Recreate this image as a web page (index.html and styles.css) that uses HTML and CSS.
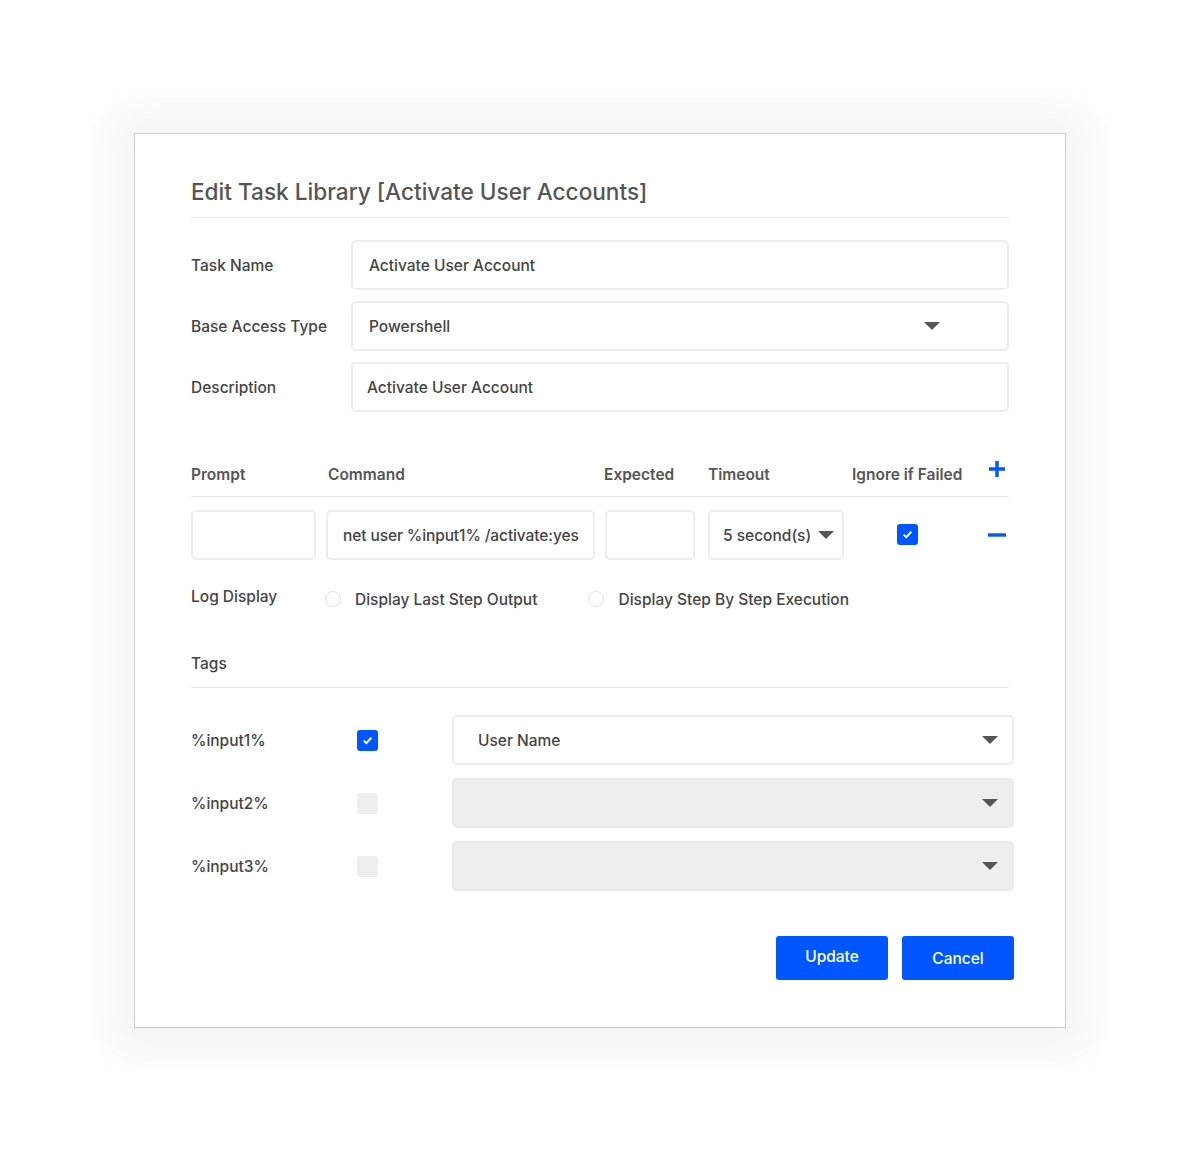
FILE: index.html
```html
<!DOCTYPE html>
<html lang="en">

    <head>
        <meta charset="UTF-8">
        <meta name="viewport" content="width=device-width, initial-scale=1.0">
        <title>Edit Task Library</title>

        <link rel="stylesheet" href="styles.css">

    </head>

    <body>
        <div class="modal">
            <h1 class="modal-title">Edit Task Library [Activate User Accounts]</h1>

            <div class="fields">
                <div class="field">
                    <label class="field-label">Task Name</label>
                    <div class="box">Activate User Account</div>
                </div>
                <div class="field">
                    <label class="field-label">Base Access Type</label>
                    <div class="box select">
                        <span>Powershell</span>
                        <span class="caret caret-base"></span>
                    </div>
                </div>
                <div class="field">
                    <label class="field-label">Description</label>
                    <div class="box box-desc">Activate User Account</div>
                </div>
            </div>

            <div class="steps-head">
                <span>Prompt</span>
                <span class="col-command">Command</span>
                <span class="col-expected">Expected</span>
                <span>Timeout</span>
                <span class="col-ignore">Ignore if Failed</span>
                <span class="col-action">
                    <svg width="18" height="18" viewBox="0 0 18 18">
                        <path d="M9 1v16M1 9h16" stroke="#0057ff" stroke-width="3.4" fill="none" />
                    </svg>
                </span>
            </div>

            <div class="steps-row">
                <div class="box cell-prompt"></div>
                <div class="box cell-command">net user %input1% /activate:yes</div>
                <div class="box cell-expected"></div>
                <div class="box cell-timeout select">
                    <span>5 second(s)</span>
                    <span class="caret"></span>
                </div>
                <div class="col-ignore">
                    <span class="check checked">
                        <svg width="11" height="9" viewBox="0 0 11 9">
                            <path d="M1.6 4.6 4.3 7.2 9.4 1.8" stroke="#fff" stroke-width="2" fill="none" />
                        </svg>
                    </span>
                </div>
                <div class="col-action">
                    <svg width="18" height="4" viewBox="0 0 18 4">
                        <path d="M0 2h18" stroke="#0057ff" stroke-width="3.4" />
                    </svg>
                </div>
            </div>

            <div class="log-display">
                <span class="log-label">Log Display</span>
                <label class="radio-option"><span class="radio"></span>Display Last Step Output</label>
                <label class="radio-option radio-second"><span class="radio"></span>Display Step By Step Execution</label>
            </div>

            <h2 class="section-title">Tags</h2>

            <div class="tags">
                <div class="tag-row">
                    <span class="tag-name">%input1%</span>
                    <span class="check checked">
                        <svg width="11" height="9" viewBox="0 0 11 9">
                            <path d="M1.6 4.6 4.3 7.2 9.4 1.8" stroke="#fff" stroke-width="2" fill="none" />
                        </svg>
                    </span>
                    <div class="box select tag-select">
                        <span>User Name</span>
                        <span class="caret"></span>
                    </div>
                </div>
                <div class="tag-row">
                    <span class="tag-name">%input2%</span>
                    <span class="check"></span>
                    <div class="box select tag-select disabled">
                        <span></span>
                        <span class="caret"></span>
                    </div>
                </div>
                <div class="tag-row">
                    <span class="tag-name">%input3%</span>
                    <span class="check"></span>
                    <div class="box select tag-select disabled">
                        <span></span>
                        <span class="caret"></span>
                    </div>
                </div>
            </div>

            <div class="actions">
                <button type="button" class="btn btn-update">Update</button>
                <button type="button" class="btn">Cancel</button>
            </div>
        </div>
    </body>

</html>
```

FILE: styles.css
```css
* {
    margin: 0;
    padding: 0;
    box-sizing: border-box;
}

body {
    font-family: 'Inter', 'Liberation Sans', sans-serif;
    background-color: #fff;
    color: #444;
    font-size: 15.5px;
    padding: 133px 0 134px;
}

.modal {
    width: 932px;
    margin: 0 auto;
    padding: 43px 56px 47px;
    background-color: #fff;
    border: 1px solid #cdcdcd;
    box-shadow: 0 2px 40px 24px rgba(0, 0, 0, 0.045);
}

.modal-title {
    font-size: 22.6px;
    line-height: 28px;
    font-weight: 500;
    color: #555;
    padding-top: 1px;
    padding-bottom: 11px;
    border-bottom: 1px solid #e8e8e8;
}

/* basic fields */

.fields {
    margin-top: 22px;
    display: flex;
    flex-direction: column;
    gap: 11px;
}

.field {
    display: flex;
    align-items: center;
}

.field-label {
    width: 160px;
    color: #444;
    font-weight: 500;
}

.box {
    height: 50px;
    border: 2px solid #ededed;
    border-radius: 5px;
    background-color: #fff;
    display: flex;
    align-items: center;
    padding-left: 16px;
    color: #444;
    font-weight: 500;
}

.field .box {
    flex: 1;
}

.box-desc {
    padding-left: 14px;
}

.select {
    justify-content: space-between;
    padding-right: 13px;
}

.caret {
    width: 0;
    height: 0;
    border-left: 8px solid transparent;
    border-right: 8px solid transparent;
    border-top: 8px solid #555;
}

.caret-base {
    margin-right: 54px;
}

/* steps table */

.steps-head,
.steps-row {
    display: grid;
    grid-template-columns: 135px 279px 103px 144px 110px 1fr;
    align-items: center;
}

.steps-head {
    margin-top: 51px;
    padding-bottom: 9px;
    border-bottom: 1px solid #e8e8e8;
    font-weight: 600;
    color: #555;
    line-height: 24px;
}

.col-command {
    padding-left: 2px;
}

.col-expected {
    margin-left: -1px;
}

.col-ignore {
    text-align: center;
    white-space: nowrap;
}

.col-action {
    display: flex;
    justify-content: flex-end;
    padding-right: 3px;
}

.steps-head .col-action {
    align-self: start;
    margin-top: -3px;
}

.steps-row {
    margin-top: 13px;
}

.cell-prompt {
    width: 125px;
}

.cell-command {
    width: 269px;
    padding-left: 15px;
    letter-spacing: -0.1px;
}

.cell-expected {
    width: 90px;
}

.cell-timeout {
    width: 136px;
    padding-left: 13px;
    padding-right: 8px;
}

.steps-row .col-ignore {
    display: flex;
    justify-content: center;
    margin-top: -1px;
}

/* checkboxes and radios */

.check {
    width: 21px;
    height: 21px;
    border-radius: 3px;
    background-color: #eee;
    display: inline-flex;
    align-items: center;
    justify-content: center;
}

.check.checked {
    background-color: #0057ff;
}

.log-display {
    margin-top: 28px;
    display: flex;
    align-items: center;
    height: 22px;
}

.log-label {
    width: 134px;
    margin-top: -5px;
    font-weight: 500;
}

.radio-option {
    display: flex;
    align-items: center;
    font-weight: 500;
}

.radio {
    width: 16px;
    height: 16px;
    border: 1px solid #e2e2e2;
    border-radius: 50%;
    margin-right: 14px;
}

.radio-second {
    margin-left: 51px;
}

/* tags */

.section-title {
    margin-top: 44px;
    font-size: 15.5px;
    line-height: 20px;
    font-weight: 500;
    color: #444;
    padding-bottom: 13px;
    border-bottom: 1px solid #e8e8e8;
}

.tags {
    margin-top: 27px;
    margin-right: -5px;
    display: flex;
    flex-direction: column;
    gap: 13px;
}

.tag-row {
    display: grid;
    grid-template-columns: 166px 95px 1fr;
    align-items: center;
}

.tag-name {
    font-weight: 500;
}

.tag-select {
    padding-left: 24px;
    padding-right: 14px;
}

.tag-select.disabled {
    background-color: #eee;
    border-color: #eaeaea;
}

/* buttons */

.actions {
    margin-top: 45px;
    margin-right: -5px;
    display: flex;
    justify-content: flex-end;
    gap: 14px;
}

.btn {
    width: 112px;
    height: 44px;
    background-color: #0057ff;
    color: #fff;
    border: none;
    border-radius: 3px;
    font-family: inherit;
    font-size: 15.5px;
    font-weight: 500;
    cursor: pointer;
}

.btn-update {
    padding-bottom: 3px;
}

.btn:hover {
    background-color: #0047d6;
}
```
